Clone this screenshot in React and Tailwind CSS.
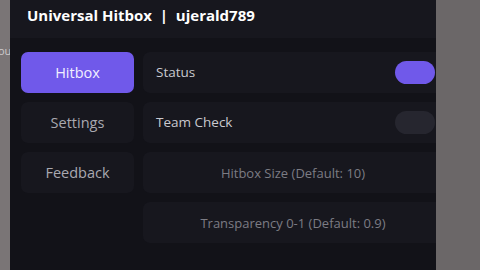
const FONT = { fontFamily: '"Open Sans", "DejaVu Sans", sans-serif' };

const NAV = ["Hitbox", "Settings", "Feedback"];

function NavButton({ label, active }) {
  return (
    <div
      className={
        "h-[41px] w-[113px] rounded-[7px] flex items-center justify-center text-[14.5px] " +
        (active ? "bg-[#7059ea] text-[#f2f0ff]" : "bg-[#17171e] text-[#a9a9b0]")
      }
    >
      {label}
    </div>
  );
}

function Toggle({ on }) {
  return (
    <div
      className={
        "h-[23px] w-[40px] rounded-full " + (on ? "bg-[#7059ea]" : "bg-[#26262f]")
      }
    />
  );
}

function ToggleRow({ label, on }) {
  return (
    <div className="h-[41px] w-[300px] rounded-[7px] bg-[#17171e] flex items-center justify-between pl-[13px] pr-[8px]">
      <span className="text-[13.5px] text-[#c9c9cf]">{label}</span>
      <Toggle on={on} />
    </div>
  );
}

function InputRow({ placeholder }) {
  return (
    <div className="h-[41px] w-[300px] rounded-[7px] bg-[#17171e] flex items-center justify-center pt-[2px]">
      <span className="text-[13px] text-[#7c7c84]">{placeholder}</span>
    </div>
  );
}

export default function App() {
  return (
    <div className="w-[480px] h-[270px] overflow-hidden flex bg-[#6b6768]" style={FONT}>
      {/* desktop strip left */}
      <div className="w-[10px] h-full bg-[#7a7576] overflow-hidden flex flex-col">
        <div className="h-[43px]" />
        <span className="text-[11px] text-[#cfcbcc] whitespace-nowrap -ml-[2px]">ou</span>
      </div>

      {/* window */}
      <div className="w-[426px] h-full bg-[#121218] overflow-hidden flex flex-col">
        <div className="h-[38px] bg-[#17171e] flex items-start pt-[4px] pl-[17px] shrink-0">
          <span className="text-[15px] font-bold text-white whitespace-nowrap">
            Universal Hitbox&nbsp;&nbsp;|&nbsp;&nbsp;ujerald789
          </span>
        </div>
        <div className="flex gap-[9px] pl-[11px] pt-[14px]">
          <div className="flex flex-col gap-[9px] shrink-0">
            {NAV.map((n, i) => (
              <NavButton key={n} label={n} active={i === 0} />
            ))}
          </div>
          <div className="flex flex-col gap-[9px] shrink-0">
            <ToggleRow label="Status" on />
            <ToggleRow label="Team Check" />
            <InputRow placeholder="Hitbox Size (Default: 10)" />
            <InputRow placeholder="Transparency 0-1 (Default: 0.9)" />
          </div>
        </div>
      </div>

      {/* desktop right */}
      <div className="flex-1 h-full bg-[#6b6768]" />
    </div>
  );
}
